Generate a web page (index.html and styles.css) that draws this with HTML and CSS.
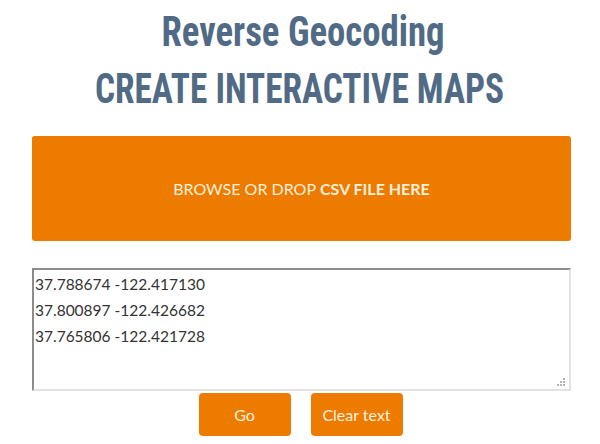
FILE: index.html
```html
<!DOCTYPE html>
<html>
<head>
<meta charset="utf-8">
<link rel="stylesheet" href="styles.css">
</head>
<body>
<div class="page">
  <h1 class="title"><span class="l1">Reverse Geocoding</span><span class="l2">CREATE INTERACTIVE MAPS</span></h1>
  <div class="drop">BROWSE OR DROP <b>CSV FILE HERE</b></div>
  <div class="area">
    <textarea class="coords">37.788674 -122.417130
37.800897 -122.426682
37.765806 -122.421728</textarea>
    <svg class="grip" width="9" height="9" viewBox="0 0 9 9"><g fill="#b5b5b5"><rect x="6" y="0" width="2" height="2"/><rect x="3" y="3" width="2" height="2"/><rect x="6" y="3" width="2" height="2"/><rect x="0" y="6" width="2" height="2"/><rect x="3" y="6" width="2" height="2"/><rect x="6" y="6" width="2" height="2"/></g></svg>
  </div>
  <div class="actions">
    <button class="btn">Go</button>
    <button class="btn">Clear text</button>
  </div>
</div>
</body>
</html>
```
FILE: styles.css
```css
html, body { margin: 0; padding: 0; background: #fff; }
body { font-family: "Lato", "Open Sans", sans-serif; }
.page { width: 539px; margin-left: 32px; padding-top: 3px; }
.title {
  margin: 0;
  text-align: center;
  font-family: "Roboto Condensed", "Roboto", sans-serif;
  font-stretch: condensed;
  font-weight: bold;
  font-size: 42px;
  line-height: 57px;
  color: #516b86;
}
.title span { display: block; white-space: nowrap; transform-origin: 50% 50%; }
.l1 { transform: scaleX(0.875); margin-left: 3px; }
.l2 { transform: scaleX(0.84); margin-left: -4px; }
.drop {
  margin-top: 19px;
  height: 105px;
  background: #ec7b00;
  border-radius: 3px;
  color: #fdf0dc;
  font-size: 16px;
  display: flex;
  align-items: center;
  justify-content: center;
}
.drop b { font-weight: bold; margin-left: 4px; }
.area { position: relative; margin-top: 27px; }
.coords {
  display: block;
  box-sizing: border-box;
  width: 539px;
  height: 123px;
  border-style: solid;
  border-width: 2px;
  border-color: #8c8c8c #e2e2e2 #e2e2e2 #8c8c8c;
  padding: 1px 1px;
  font-family: "Lato", "Open Sans", sans-serif;
  font-size: 15.5px;
  line-height: 26px;
  color: #333;
  resize: none;
  outline: none;
}
.grip { position: absolute; right: 5px; bottom: 4px; }
.actions { display: flex; justify-content: center; gap: 20px; margin-top: 2px; margin-left: -2px; }
.btn {
  width: 92px;
  height: 43px;
  border: 0;
  border-radius: 4px;
  background: #ec7b00;
  color: #fdf0dc;
  font-family: "Lato", "Open Sans", sans-serif;
  font-size: 16px;
}
```
